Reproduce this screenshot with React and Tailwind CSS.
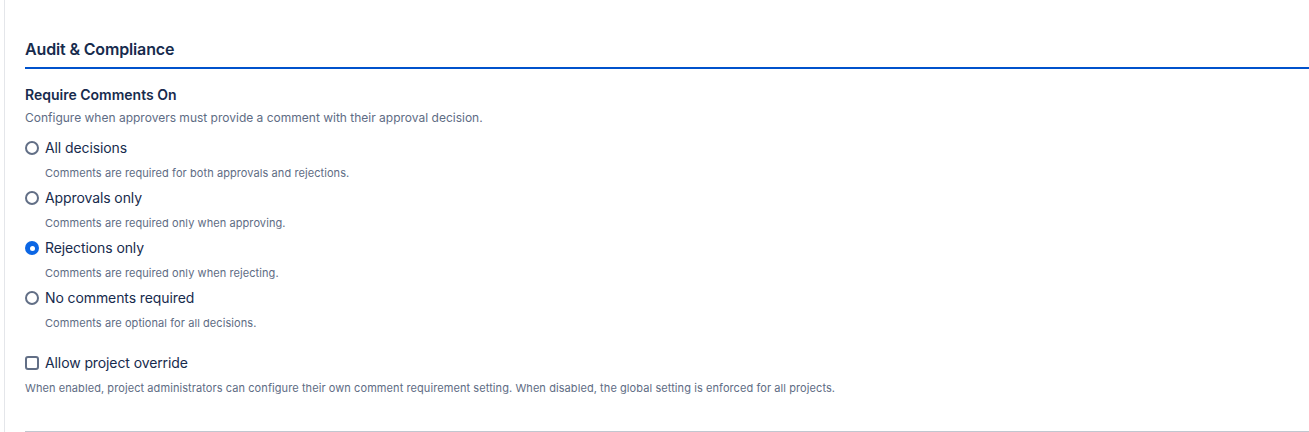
import React, { useState } from 'react';

const options = [
  { id: 'all', label: 'All decisions', hint: 'Comments are required for both approvals and rejections.' },
  { id: 'approvals', label: 'Approvals only', hint: 'Comments are required only when approving.' },
  { id: 'rejections', label: 'Rejections only', hint: 'Comments are required only when rejecting.' },
  { id: 'none', label: 'No comments required', hint: 'Comments are optional for all decisions.' },
];

const Radio = ({ checked }) => (
  <span
    className={`flex h-[14px] w-[14px] shrink-0 items-center justify-center rounded-full ${
      checked ? 'bg-[#0c66e4]' : 'border-2 border-[#626f86] bg-white'
    }`}
  >
    {checked && <span className="h-[5px] w-[5px] rounded-full bg-white" />}
  </span>
);

export default function App() {
  const [value, setValue] = useState('rejections');
  const [override, setOverride] = useState(false);

  return (
    <div className="min-h-[432px] bg-white pl-1 font-['Inter',sans-serif] text-[#172b4d]">
      <div className="min-h-[432px] border-l border-[#e4e6ea] pl-5 pt-[37px]">
        {/* Section header */}
        <div className="border-b-2 border-[#0052cc] pb-[6px]">
          <h2 className="text-[16px] font-semibold leading-6 tracking-[-0.15px]">Audit &amp; Compliance</h2>
        </div>

        <div className="pt-4">
          <h3 className="text-[14px] font-semibold leading-5">Require Comments On</h3>
          <p className="mt-[5px] text-[12px] leading-4 text-[#5e6c84]">
            Configure when approvers must provide a comment with their approval decision.
          </p>

          <div className="mt-3 flex flex-col gap-[7px]">
            {options.map((opt) => (
              <div key={opt.id}>
                <label
                  className="flex cursor-pointer items-center gap-[6px] text-[14px] leading-5 tracking-[-0.1px]"
                  onClick={() => setValue(opt.id)}
                >
                  <Radio checked={value === opt.id} />
                  <span>{opt.label}</span>
                </label>
                <p className="mt-[7px] pl-5 text-[11px] leading-4 tracking-[0.08px] text-[#5e6c84]">{opt.hint}</p>
              </div>
            ))}
          </div>

          {/* Override */}
          <div className="mt-[22px]">
            <label
              className="flex cursor-pointer items-center gap-[6px] text-[14px] leading-5 tracking-[-0.1px]"
              onClick={() => setOverride(!override)}
            >
              <span
                className={`h-[14px] w-[14px] shrink-0 rounded-[3px] border-2 ${
                  override ? 'border-[#0c66e4] bg-[#0c66e4]' : 'border-[#626f86] bg-white'
                }`}
              />
              <span>Allow project override</span>
            </label>
            <p className="mt-[7px] text-[11px] leading-4 tracking-[0.08px] text-[#5e6c84]">
              When enabled, project administrators can configure their own comment requirement setting. When disabled, the global setting is enforced for all projects.
            </p>
          </div>
        </div>

        <div className="mt-[35px] border-b border-[#c1c7d0]" />
      </div>
    </div>
  );
}
